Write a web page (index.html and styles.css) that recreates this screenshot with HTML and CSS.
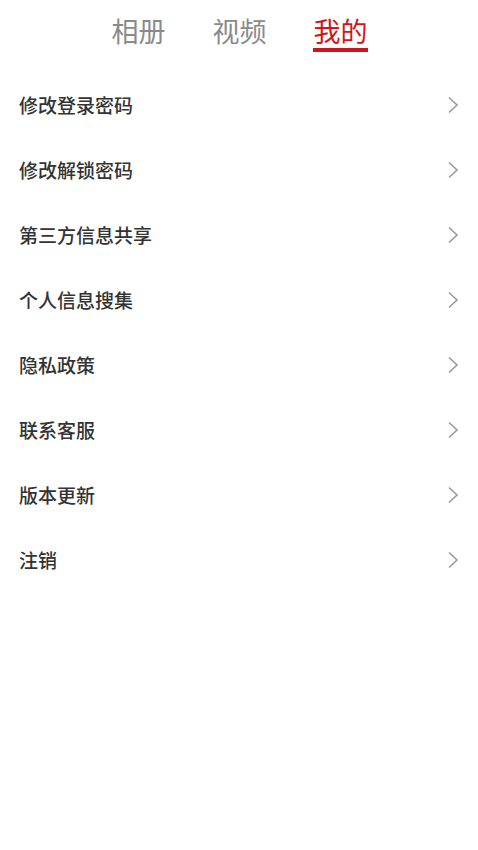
FILE: index.html
```html
<!DOCTYPE html>
<html lang="zh">
<head>
<meta charset="utf-8">
<link rel="stylesheet" href="styles.css">
</head>
<body>
<header class="tabs">
  <div class="tab">相册</div>
  <div class="tab">视频</div>
  <div class="tab active">我的</div>
</header>
<ul class="menu">
  <li class="row"><span>修改登录密码</span><svg class="chev" viewBox="0 0 12 18"><path d="M2 1.5 L10 9 L2 16.5"/></svg></li>
  <li class="row"><span>修改解锁密码</span><svg class="chev" viewBox="0 0 12 18"><path d="M2 1.5 L10 9 L2 16.5"/></svg></li>
  <li class="row"><span>第三方信息共享</span><svg class="chev" viewBox="0 0 12 18"><path d="M2 1.5 L10 9 L2 16.5"/></svg></li>
  <li class="row"><span>个人信息搜集</span><svg class="chev" viewBox="0 0 12 18"><path d="M2 1.5 L10 9 L2 16.5"/></svg></li>
  <li class="row"><span>隐私政策</span><svg class="chev" viewBox="0 0 12 18"><path d="M2 1.5 L10 9 L2 16.5"/></svg></li>
  <li class="row"><span>联系客服</span><svg class="chev" viewBox="0 0 12 18"><path d="M2 1.5 L10 9 L2 16.5"/></svg></li>
  <li class="row"><span>版本更新</span><svg class="chev" viewBox="0 0 12 18"><path d="M2 1.5 L10 9 L2 16.5"/></svg></li>
  <li class="row"><span>注销</span><svg class="chev" viewBox="0 0 12 18"><path d="M2 1.5 L10 9 L2 16.5"/></svg></li>
</ul>
</body>
</html>
```
FILE: styles.css
```css
html, body {
  margin: 0;
  padding: 0;
  background: #fff;
}
body {
  font-family: "Noto Sans CJK SC", "Noto Sans", sans-serif;
  width: 478px;
}
.tabs {
  display: flex;
  justify-content: center;
  gap: 46px;
  height: 72px;
  box-sizing: border-box;
  padding-top: 16px;
}
.tab {
  font-size: 27px;
  line-height: 30px;
  height: 36px;
  color: #8a8a8a;
  box-sizing: border-box;
  padding-left: 1px;
}
.tab.active {
  color: #d0161d;
  border-bottom: 4px solid #d0161d;
}
.menu {
  list-style: none;
  margin: 0;
  padding: 0;
}
.row {
  display: flex;
  align-items: center;
  justify-content: space-between;
  height: 65px;
  padding: 0 19px 0 19px;
  font-size: 19px;
  font-weight: 500;
  color: #333;
}
.chev {
  width: 12px;
  height: 18px;
  fill: none;
  stroke: #9a9a9a;
  stroke-width: 1.6;
}
```
